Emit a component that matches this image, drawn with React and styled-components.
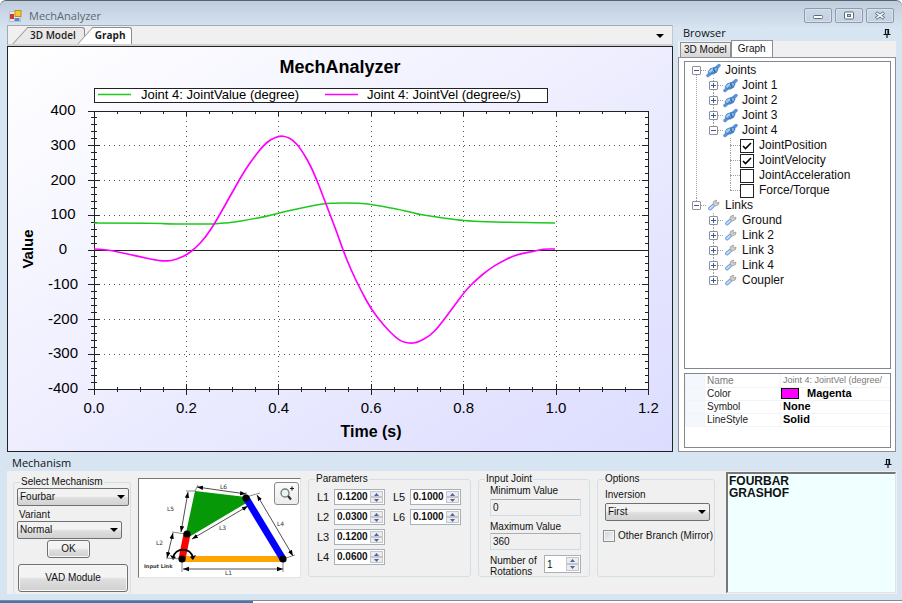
import React, { useState } from 'react';
import styled, { createGlobalStyle, css } from 'styled-components';

const GlobalStyle = createGlobalStyle`
  * {
    box-sizing: border-box;
  }
  body {
    margin: 0;
    background-color: #ffffff;
    color: #111111;
    font-family: 'Liberation Sans', Arial, sans-serif;
    font-size: 10px;
    line-height: 12px;
  }
  button, input, select, textarea {
    margin: 0;
    font: inherit;
    color: inherit;
  }
`;

const Page = styled.div`
  display: flex;
  flex-direction: column;
  min-height: 100vh;
`;
const WindowFrame = styled.div`
  flex: 1;
  display: flex;
  flex-direction: column;
  padding: 0 5px 6px 7px;
  background-color: #d7e4f2;
  background-image: linear-gradient(#becddd, #d7e4f2 28px);
  border-top: 1px solid #5c6269;
  border-bottom: 1px solid #85898e;
  border-radius: 6px 6px 0 0;
`;
const Desktop = styled.div`
  display: flex;
  height: 2px;
  background: linear-gradient(90deg, #3f76b5 28%, #ffffff 28%);
`;

const TitleBar = styled.header`
  display: flex;
  align-items: center;
  gap: 7px;
  height: 24px;
  padding: 5px 3px 0 2px;
`;
const AppName = styled.h1`
  flex: 1;
  margin: 0;
  font: 11px/14px 'Open Sans', sans-serif;
  color: #5d6670;
`;
const WindowButtons = styled.div`
  display: flex;
  gap: 3px;
`;
const WindowButton = styled.button`
  display: flex;
  align-items: center;
  justify-content: center;
  width: 28px;
  height: 15px;
  padding: 0;
  border: 1px solid #8d9bab;
  border-radius: 2px;
  background: linear-gradient(#cbd8e6, #c3d1e1);
  box-shadow: inset 0 0 0 1px #d7e2ee;
`;

const Body = styled.div`
  flex: 1;
  display: flex;
  gap: 5px;
  min-height: 0;
  padding-bottom: 3px;
`;
const Main = styled.main`
  flex: 1;
  display: flex;
  flex-direction: column;
  min-width: 0;
  background-color: #f0f0f0;
`;
const MainTabs = styled.div`
  display: flex;
  align-items: flex-end;
  height: 21px;
  padding-left: 5px;
  padding-right: 8px;
  border-top: 1px solid #a4a9ae;
  border-left: 1px solid #a4a9ae;
  border-right: 1px solid #c4c8cc;
  border-bottom: 2px solid #d0d0d0;
`;
const MainTab = styled.button`
  position: relative;
  isolation: isolate;
  height: 17px;
  margin-left: 16px;
  padding: 0 8px 2px 1px;
  border: 1px solid #8c8c8c;
  border-width: 1px 1px 0 0;
  border-radius: 0 3px 0 0;
  background-color: ${(p) => (p.$active ? '#ffffff' : '#e9e9e9')};
  font: ${(p) => (p.$active ? 'bold' : '600')} 10px/14px 'Open Sans', sans-serif;
  color: #1c1c1c;
  ${(p) => p.$active && css`
    margin-left: 9px;
    padding-right: 6px;
    z-index: 1;
  `}
  &::before {
    content: '';
    position: absolute;
    top: -1px;
    bottom: 0;
    left: -9px;
    width: 16px;
    border-top: 1px solid #8c8c8c;
    border-left: 1px solid #8c8c8c;
    background-color: inherit;
    transform: skewX(-42deg);
    z-index: -1;
  }
`;
const TabMenu = styled.button`
  margin: 0 0 3px auto;
  padding: 3px 0;
  border: 0;
  background: none;
  line-height: 0;
`;
const GraphPanel = styled.div`
  flex: 1;
  display: flex;
  min-height: 0;
  border: 1px solid #222222;
  background: linear-gradient(148deg, #ffffff, #dcdcff);
`;
const Chart = styled.svg`
  display: block;
  flex: 1;
  min-width: 0;
  min-height: 0;
  font-family: 'Liberation Sans', Arial, sans-serif;
`;

const Sidebar = styled.aside`
  display: flex;
  flex-direction: column;
  width: 218px;
  margin-right: 1px;
`;
const PanelHeader = styled.div`
  display: flex;
  align-items: center;
  justify-content: space-between;
  height: 16px;
  padding: 0 5px;
  & h2 {
    margin: 0;
    font: 11px/14px 'Open Sans', sans-serif;
    color: #111111;
  }
`;
const SideTabs = styled.div`
  display: flex;
  align-items: flex-end;
  height: 16px;
  padding-left: 2px;
  background-color: #f0f0f0;
`;
const SideTab = styled.button`
  height: ${(p) => (p.$active ? '18px' : '15px')};
  margin-bottom: ${(p) => (p.$active ? '-1px' : '0')};
  padding: ${(p) => (p.$active ? '0 6px 2px' : '0 3px')};
  border: 1px solid #8e8f94;
  border-bottom: 0;
  background: ${(p) => (p.$active ? '#ffffff' : 'linear-gradient(#f2f2f2, #d6d6d6)')};
  line-height: 14px;
  white-space: nowrap;
`;
const SideContent = styled.div`
  flex: 1;
  display: flex;
  flex-direction: column;
  gap: 4px;
  padding: 3px 4px 3px 5px;
  border: 1px solid #8e8f94;
  background-color: #ffffff;
`;
const TreeBox = styled.div`
  flex: 1;
  padding: 1px 7px;
  border: 1px solid #828790;
`;
const TreeList = styled.ul`
  list-style: none;
  margin: 0;
  padding: 0 0 0 ${(p) => (p.$root ? '0' : '17px')};
`;
const TreeItem = styled.li`
  background-image: repeating-linear-gradient(#a0a0a0 0 1px, transparent 1px 2px);
  background-repeat: no-repeat;
  background-position: 4px ${(p) => (p.$first ? '8px' : '0')};
  background-size: 1px 100%;
  &:last-child {
    background-size: 1px 8px;
  }
`;
const TreeRow = styled.div`
  display: flex;
  align-items: center;
  height: 15px;
  font-size: 12px;
  line-height: 15px;
  white-space: nowrap;
  & label {
    padding-left: 5px;
  }
`;
const Toggle = styled.button`
  display: flex;
  width: 9px;
  height: 9px;
  padding: 0;
  border: 1px solid #919191;
  border-radius: 1px;
  background-color: #ffffff;
`;
const Stub = styled.span`
  width: ${(p) => (p.$leaf ? '10px' : '5px')};
  margin-left: ${(p) => (p.$leaf ? '4px' : '0')};
  border-top: 1px dotted #a0a0a0;
`;
const TreeIcon = styled.svg`
  width: 15px;
  height: 15px;
  margin-right: 4px;
`;
const CheckBox = styled.span`
  position: relative;
  display: flex;
  & input {
    appearance: none;
    width: 14px;
    height: 14px;
    border: 1px solid #222222;
    background-color: #ffffff;
  }
  & svg {
    position: absolute;
    top: 0;
    left: 0;
    pointer-events: none;
    visibility: hidden;
  }
  & input:checked + svg {
    visibility: visible;
  }
`;

const PropertyBox = styled.div`
  height: 75px;
  overflow: hidden;
  border: 1px solid #828790;
`;
const PropertyTable = styled.table`
  width: 100%;
  table-layout: fixed;
  border-collapse: collapse;
  line-height: 11px;
  & td, & th {
    height: 13px;
    padding: 0 0 0 2px;
    border-bottom: 1px solid #f0f3f8;
    border-left: 1px solid #f0f3f8;
    font-weight: normal;
    text-align: left;
    white-space: nowrap;
  }
`;
const Gutter = styled.td`
  width: 19px;
  background-color: #f4f7fc;
`;
const PropertyName = styled.th`
  width: 76px;
  color: ${(p) => (p.$dim ? '#7a7a7a' : '#222222')};
`;
const PropertyValue = styled.td`
  color: ${(p) => (p.$dim ? '#7a7a7a' : '#000000')};
  font-size: ${(p) => (p.$dim ? '9px' : '11px')};
  font-weight: ${(p) => (p.$dim ? 'normal' : 'bold')} !important;
`;
const ColorValue = styled.div`
  display: flex;
  align-items: center;
  gap: 8px;
`;
const Swatch = styled.span`
  width: 18px;
  height: 11px;
  margin-left: -2px;
  border: 1px solid #000000;
  background-color: #ff00ff;
`;

const MechanismPanel = styled.section`
  display: flex;
  align-items: flex-start;
  gap: 7px;
  height: 123px;
  padding: 2px 1px 0 6px;
  background-color: #f0f0f0;
`;
const Group = styled.fieldset`
  flex: none;
  width: ${(p) => p.$width}px;
  min-width: 0;
  height: 104px;
  margin: 0;
  padding: 0 ${(p) => p.$side}px;
  border: 1px solid #d3dfe6;
  border-radius: 3px;
  & legend {
    margin-left: ${(p) => 6 - p.$side}px;
    padding: 0 1px;
  }
`;
const MechanismGroup = styled(Group)`
  height: 118px;
  margin-top: 3px;
  border-bottom: 0;
`;
const Stack = styled.div`
  display: flex;
  flex-direction: column;
  align-items: flex-start;
  padding-top: ${(p) => p.$top || 0}px;
`;
const SelectBox = styled.div`
  position: relative;
  width: ${(p) => (p.$wide ? '112px' : '105px')};
  &::after {
    content: '';
    position: absolute;
    top: 7px;
    right: 4px;
    border: 4px solid transparent;
    border-top-color: #000000;
    border-bottom: 0;
    pointer-events: none;
  }
  & select {
    display: block;
    appearance: none;
    width: 100%;
    height: 18px;
    padding: 0 2px;
    border: 1px solid #707070;
    border-radius: 2px;
    background: linear-gradient(#f2f2f2 45%, #dedede 55%, #d2d2d2);
  }
`;
const VariantLabel = styled.label`
  padding: 3px 0 0 2px;
`;
const PushButton = styled.button`
  width: ${(p) => (p.$large ? '110px' : '43px')};
  height: ${(p) => (p.$large ? '28px' : '18px')};
  margin: ${(p) => (p.$large ? '6px 0 0 1px' : '1px 0 0 30px')};
  padding: 0;
  border: 1px solid #707070;
  border-radius: 3px;
  background: linear-gradient(#f3f3f3 45%, #dfdfdf 55%, #d0d0d0);
  box-shadow: inset 0 0 0 1px #f8f8f8;
`;
const Picture = styled.div`
  position: relative;
  flex: none;
  width: 163px;
  height: 100px;
  margin-top: 5px;
  border: 1px solid #e3e3e3;
  border-top-color: #777777;
  border-left-color: #777777;
  background-color: #ffffff;
  & > svg {
    display: block;
    width: 100%;
    height: 100%;
  }
`;
const ZoomButton = styled.button`
  position: absolute;
  top: 3px;
  right: 1px;
  width: 25px;
  height: 23px;
  padding: 2px;
  border: 1px solid #8a8a8a;
  border-radius: 3px;
  background: linear-gradient(#fbfbfb, #ececec);
  line-height: 0;
`;
const ParamColumns = styled.div`
  display: flex;
  gap: 8px;
  padding-top: 4px;
`;
const ParamColumn = styled.div`
  display: flex;
  flex-direction: column;
  gap: 4px;
`;
const ParamRow = styled.div`
  display: flex;
  align-items: center;
  height: 16px;
  & label {
    width: 17px;
    font-size: 11px;
  }
`;
const Spinner = styled.div`
  display: flex;
  width: ${(p) => (p.$narrow ? '37px' : '51px')};
  height: ${(p) => (p.$narrow ? '18px' : '16px')};
  padding: 1px;
  border: 1px solid #a9b0b8;
  background-color: #ffffff;
  & input {
    flex: 1;
    min-width: 0;
    padding: 0 0 0 1px;
    border: 0;
    background: none;
    font-weight: ${(p) => (p.$narrow ? 'normal' : 'bold')};
  }
`;
const SpinButtons = styled.div`
  display: flex;
  flex-direction: column;
  width: 13px;
  & button {
    flex: 1;
    display: flex;
    align-items: center;
    justify-content: center;
    padding: 0;
    border: 1px solid #c4c6ca;
    background-color: #ececec;
    line-height: 0;
  }
`;
const ReadonlyField = styled.input`
  width: 91px;
  height: 17px;
  margin: ${(p) => (p.$spaced ? '2px 0 5px' : '0 0 5px')};
  padding: 0 2px;
  border: 1px solid #d3dbe2;
  border-top-color: #abadb3;
  background-color: #f0f0f0;
`;
const Rotations = styled.div`
  display: flex;
  justify-content: space-between;
  width: 91px;
  line-height: 11px;
`;
const InversionLabel = styled.label`
  padding-bottom: 2px;
`;
const CheckRow = styled.label`
  display: flex;
  align-items: center;
  gap: 3px;
  padding-top: 9px;
  margin-left: -2px;
  white-space: nowrap;
  & input {
    appearance: none;
    width: 12px;
    height: 12px;
    border: 1px solid #8e8f8f;
    background: linear-gradient(135deg, #cfd3d8, #f6f6f6);
    box-shadow: inset 0 0 0 1px #f4f4f4;
  }
`;
const Output = styled.textarea`
  flex: 1;
  align-self: stretch;
  min-width: 0;
  margin: -1px 0 1px 4px;
  padding: 1px;
  border: 1px solid #e3e3e3;
  border-top: 2px solid #777777;
  border-left: 2px solid #777777;
  background-color: #f0ffff;
  font-size: 12px;
  font-weight: bold;
  resize: none;
`;

const X0 = 86;
const Y0 = 203;
const sx = (t) => X0 + t * 462;
const sy = (v) => Y0 - v * 0.3475;

// curve samples in plot units: x from the left axis, y from the top of the panel
const velocity = [
  [0, 202], [12, 202.5], [24, 205], [36, 207.5], [46, 209.8], [62, 213.2], [70, 214], [77, 213.7],
  [87, 210.7], [93, 207.5], [101, 201.5], [111, 191], [121, 176], [130, 160], [139, 144], [151, 123],
  [161, 109], [169, 99], [177, 92], [186, 89], [192, 89.5], [199, 93], [207, 102], [219, 123],
  [231, 154.5], [242, 183], [249, 203], [257, 223], [267, 243.5], [277, 262], [289, 277.5],
  [301, 290], [308, 294.7], [316, 296.3], [323, 295.7], [336, 289], [346, 278], [359, 260.3],
  [372, 243], [382, 233], [394, 223], [406, 215.3], [419, 209], [429, 206.3], [439, 204.5],
  [449, 202], [461, 202],
];
const position = [
  [0, 176], [68, 176], [70, 177], [118, 177], [126, 176.3], [143, 175], [154, 172.7], [171, 169.7],
  [186, 165.7], [206, 161.3], [221, 158], [236, 156], [266, 156], [277, 157.5], [289, 159.3],
  [313, 164], [323, 167], [336, 169], [356, 172], [369, 173.5], [391, 175], [429, 175.3], [461, 176],
];

// quadratic segments through the midpoints of the samples
const toPath = (pts) => {
  const [first, ...rest] = pts;
  const last = pts[pts.length - 1];
  const curve = rest.slice(0, -1).map(([x, y], i) => {
    const [nx, ny] = rest[i + 1];
    return `Q${X0 + x} ${y} ${X0 + (x + nx) / 2} ${(y + ny) / 2}`;
  });
  return `M${X0 + first[0]} ${first[1]}${curve.join('')}L${X0 + last[0]} ${last[1]}`;
};

const xMajor = [0, 0.2, 0.4, 0.6, 0.8, 1, 1.2];
const yMajor = [400, 300, 200, 100, 0, -100, -200, -300, -400];
const xMinor = Array.from({ length: 25 }, (_, i) => i * 0.05);
const yMinor = Array.from({ length: 41 }, (_, i) => -400 + i * 20);

function Graph() {
  const right = sx(1.2);
  return (
    <Chart viewBox="0 0 664 404" role="img" aria-label="MechAnalyzer">
      <text x="332" y="26" textAnchor="middle" fontSize="18" fontWeight="bold">MechAnalyzer</text>
      <rect x="86.5" y="41.5" width="453" height="14" fill="#fff" stroke="#222" />
      <path d="M90 47.5h33" stroke="#1fc81f" strokeWidth="1.5" />
      <text x="133" y="52" fontSize="13">Joint 4: JointValue (degree)</text>
      <path d="M317 47.5h33" stroke="#f0f" strokeWidth="1.5" />
      <text x="359" y="52" fontSize="13">Joint 4: JointVel (degree/s)</text>

      <rect x={X0} y={sy(400)} width={right - X0} height="278" fill="#fff" />
      <g stroke="#555" strokeDasharray="1 4" shapeRendering="crispEdges">
        {xMajor.slice(1, 6).map((t) => (
          <path key={t} d={`M${sx(t)} 64V342`} />
        ))}
        {yMajor.slice(1, 8).map((v) => (
          <path key={v} d={`M${X0} ${sy(v)}H${right}`} />
        ))}
      </g>
      <g stroke="#222" fill="none" shapeRendering="crispEdges">
        <rect x={X0} y="64" width={right - X0} height="278" />
        <path d={`M${X0} ${Y0}H${right}`} />
        {xMinor.map((t) => (
          <path key={t} d={`M${sx(t)} 64v3M${sx(t)} 340v5`} />
        ))}
        {yMinor.map((v) => (
          <path key={v} d={`M${X0 - 3} ${sy(v)}h6M${right - 3} ${sy(v)}h3`} />
        ))}
        {xMajor.map((t) => (
          <path key={t} d={`M${sx(t)} 64v5M${sx(t)} 337v11`} />
        ))}
        {yMajor.map((v) => (
          <path key={v} d={`M${X0 - 6} ${sy(v)}h12M${right - 6} ${sy(v)}h6`} />
        ))}
      </g>
      <path d={toPath(position)} fill="none" stroke="#1fc81f" strokeWidth="1.5" />
      <path d={toPath(velocity)} fill="none" stroke="#f0f" strokeWidth="1.7" />

      <g fontSize="15" textAnchor="middle">
        {yMajor.map((v) => (
          <text key={v} x="55" y={sy(v) + 4}>{v}</text>
        ))}
        {xMajor.map((t) => (
          <text key={t} x={sx(t)} y="366">{t.toFixed(1)}</text>
        ))}
      </g>
      <g fontSize="16" fontWeight="bold" textAnchor="middle">
        <text x="363" y="390">Time (s)</text>
        <text transform="translate(25 202) rotate(-90)" fontSize="15">Value</text>
      </g>
    </Chart>
  );
}

function PinIcon() {
  return (
    <svg width="8" height="10" viewBox="0 0 8 10" aria-hidden="true">
      <path d="M2.5 6V1.5h3V6M5 1v5M0.5 6.5h7M4 7v3" fill="none" stroke="#111" strokeWidth="1.2" />
    </svg>
  );
}

function JointIcon() {
  return (
    <TreeIcon viewBox="0 0 15 15" aria-hidden="true">
      <path d="M2 12.5L13 2.5" stroke="#5e92d2" strokeWidth="3.4" strokeLinecap="round" />
      <path d="M1.5 9L4 5.5L8 4L11 3.5L12.5 6L11 9.500L7.500 11.500L4 11.5Z" fill="#4a84cc" />
      <path d="M2.5 8.5L5 6L8 5L6.5 8L4 10Z" fill="#a3cbf0" />
      <path d="M8.5 5L10.5 5L11 7L9.5 8.5Z" fill="#86b4e6" />
      <path d="M7.5 5L9 9.500" stroke="#2c5c9c" strokeWidth="0.8" />
      <path d="M6.5 7.500l1.500 1.500" stroke="#7cc9a0" />
    </TreeIcon>
  );
}

function LinkIcon() {
  return (
    <TreeIcon viewBox="0 0 15 15" aria-hidden="true">
      <path d="M4 10.5L7 7.8" stroke="#6f9fe0" strokeWidth="3.8" strokeLinecap="round" />
      <path d="M4 10.5L7 7.8" stroke="#c6dcfa" strokeWidth="1.8" strokeLinecap="round" />
      <path d="M7 6.5L7.5 3.5L10.5 2L10 4.3L11 5L13 4L12.5 6.5L9.5 8Z" fill="#cfcfcf" stroke="#8f8f8f" strokeWidth="0.7" />
    </TreeIcon>
  );
}

function TreeNode({ node, first }) {
  const [open, setOpen] = useState(!!node.open);
  return (
    <TreeItem $first={first}>
      <TreeRow>
        <Toggle aria-label={node.label} aria-expanded={open} onClick={() => setOpen(!open)}>
          <svg width="7" height="7" viewBox="0 0 7 7" aria-hidden="true">
            <path d={open ? 'M1 3.5h5' : 'M1 3.5h5M3.5 1v5'} stroke="#3a58a8" />
          </svg>
        </Toggle>
        <Stub />
        {node.kind === 'joint' ? <JointIcon /> : <LinkIcon />}
        {node.label}
      </TreeRow>
      {open && node.children && (
        <TreeList>
          {node.children.map((c) => <TreeNode key={c.label} node={c} />)}
        </TreeList>
      )}
      {open && node.checks && (
        <TreeList>
          {node.checks.map(([name, on]) => (
            <TreeItem key={name}>
              <TreeRow>
                <Stub $leaf />
                <CheckBox>
                  <input type="checkbox" id={name} defaultChecked={on} />
                  <svg width="14" height="14" viewBox="0 0 14 14" aria-hidden="true">
                    <path d="M3 7L5.5 9.5L11 4" fill="none" stroke="#000" strokeWidth="1.6" />
                  </svg>
                </CheckBox>
                <label htmlFor={name}>{name}</label>
              </TreeRow>
            </TreeItem>
          ))}
        </TreeList>
      )}
    </TreeItem>
  );
}

const tree = [
  {
    label: 'Joints',
    kind: 'joint',
    open: true,
    children: [
      { label: 'Joint 1', kind: 'joint' },
      { label: 'Joint 2', kind: 'joint' },
      { label: 'Joint 3', kind: 'joint' },
      {
        label: 'Joint 4',
        kind: 'joint',
        open: true,
        checks: [
          ['JointPosition', true],
          ['JointVelocity', true],
          ['JointAcceleration', false],
          ['Force/Torque', false],
        ],
      },
    ],
  },
  {
    label: 'Links',
    kind: 'link',
    open: true,
    children: ['Ground', 'Link 2', 'Link 3', 'Link 4', 'Coupler'].map((label) => ({ label, kind: 'link' })),
  },
];

function NumberSpinner({ id, value, step, narrow }) {
  const [num, setNum] = useState(value);
  const digits = narrow ? 0 : 4;
  const change = (d) => setNum((Number(num) + d).toFixed(digits));
  return (
    <Spinner $narrow={narrow}>
      <input id={id} value={num} onChange={(e) => setNum(e.target.value)} />
      <SpinButtons>
        <button aria-label="Increase" onClick={() => change(step)}>
          <svg width="5" height="3" viewBox="0 0 5 3"><path d="M0 3L2.5 0L5 3Z" fill="#4a62b0" /></svg>
        </button>
        <button aria-label="Decrease" onClick={() => change(-step)}>
          <svg width="5" height="3" viewBox="0 0 5 3"><path d="M0 0L2.5 3L5 0Z" fill="#4a62b0" /></svg>
        </button>
      </SpinButtons>
    </Spinner>
  );
}

const dimensionLines = [
  'M58 8L107 15',
  'M49 13L42 53',
  'M34 54L28 79',
  'M53 60L109 27',
  'M118 16L154 77',
  'M44 90H144',
];

function FourbarDrawing() {
  return (
    <svg viewBox="0 0 161 98" role="img" aria-label="Fourbar">
      <defs>
        <marker id="arrow" viewBox="0 0 6 6" refX="6" refY="3" markerWidth="6" markerHeight="6" orient="auto-start-reverse" markerUnits="userSpaceOnUse">
          <path d="M0 0.8L6 3L0 5.2Z" />
        </marker>
      </defs>
      <path d="M43 80H144" stroke="#ffa500" strokeWidth="6" />
      <path d="M43 80L48 55" stroke="#f00" strokeWidth="7" />
      <path d="M56 12L107 18L109 23L50 58L47 54Z" fill="#069806" />
      <path d="M107 19L144 80" stroke="#00f" strokeWidth="7" />
      <path d="M34 79C36 68 52 68 54 79" fill="none" stroke="#000" strokeWidth="2" />
      <path d="M31 76L37 78L34 81ZM51 78L57 76L54 81Z" />
      <g stroke="#222" strokeWidth="0.8">
        {dimensionLines.map((d) => (
          <path key={d} d={d} markerStart="url(#arrow)" markerEnd="url(#arrow)" />
        ))}
      </g>
      <path d="M47 12H56M56 12L59 6M33 53L47 55M27 79L43 80M107 18L121 14M144 80L156 76M43 83V93M144 83V93M107 13V18" stroke="#555" strokeWidth="0.7" />
      <circle cx="43" cy="80" r="3.6" />
      <circle cx="48" cy="55" r="3.6" />
      <circle cx="107" cy="19" r="3.6" />
      <circle cx="144" cy="80" r="3.6" />
      <g fontSize="6" fontFamily="DejaVu Sans, sans-serif" fill="#333">
        <text x="81" y="10">L6</text>
        <text x="28" y="32">L5</text>
        <text x="17" y="66">L2</text>
        <text x="80" y="51">L3</text>
        <text x="138" y="47">L4</text>
        <text x="86" y="96">L1</text>
        <text x="5" y="89" fontWeight="bold" fontSize="5">Input Link</text>
      </g>
    </svg>
  );
}

const paramColumns = [
  [['L1', '0.1200'], ['L2', '0.0300'], ['L3', '0.1200'], ['L4', '0.0600']],
  [['L5', '0.1000'], ['L6', '0.1000']],
];

export default function App() {
  return (
    <Page>
      <GlobalStyle />
      <WindowFrame>
        <TitleBar>
          <svg width="13" height="12" viewBox="0 0 13 12" aria-hidden="true">
            <rect x="0.5" y="1.5" width="11" height="10" fill="#e4e8ee" stroke="#b9c2cc" />
            <rect x="1" y="4" width="4" height="5" fill="#d03a2b" />
            <rect x="6" y="0.5" width="6" height="6" fill="#f5c738" stroke="#c58f12" />
            <rect x="5.5" y="8" width="5" height="3" fill="#4f86e0" />
          </svg>
          <AppName>MechAnalyzer</AppName>
          <WindowButtons>
            <WindowButton aria-label="Minimize">
              <svg width="12" height="8" viewBox="0 0 12 8"><rect x="1.5" y="3.5" width="9" height="3" rx="1" fill="#fff" stroke="#5f6a76" /></svg>
            </WindowButton>
            <WindowButton aria-label="Maximize">
              <svg width="12" height="9" viewBox="0 0 12 9"><rect x="1.5" y="1" width="9" height="7" rx="1" fill="#fff" stroke="#5f6a76" /><rect x="4.5" y="3.5" width="3" height="2" fill="#c3d1e1" stroke="#5f6a76" /></svg>
            </WindowButton>
            <WindowButton aria-label="Close">
              <svg width="12" height="9" viewBox="0 0 12 9"><path d="M2 1.5L10 7.5M10 1.5L2 7.5" stroke="#5f6a76" strokeWidth="3.4" /><path d="M2.5 1.8L9.5 7.2M9.5 1.8L2.5 7.2" stroke="#fff" strokeWidth="1.6" /></svg>
            </WindowButton>
          </WindowButtons>
        </TitleBar>

        <Body>
          <Main>
            <MainTabs>
              <MainTab>3D Model</MainTab>
              <MainTab $active>Graph</MainTab>
              <TabMenu aria-label="Tabs">
                <svg width="8" height="4" viewBox="0 0 8 4"><path d="M0 0H8L4 4Z" /></svg>
              </TabMenu>
            </MainTabs>
            <GraphPanel>
              <Graph />
            </GraphPanel>
          </Main>

          <Sidebar>
            <PanelHeader>
              <h2>Browser</h2>
              <PinIcon />
            </PanelHeader>
            <SideTabs>
              <SideTab>3D Model</SideTab>
              <SideTab $active>Graph</SideTab>
            </SideTabs>
            <SideContent>
              <TreeBox>
                <TreeList $root>
                  {tree.map((n, i) => <TreeNode key={n.label} node={n} first={i === 0} />)}
                </TreeList>
              </TreeBox>
              <PropertyBox>
                <PropertyTable>
                  <tbody>
                    <tr>
                      <Gutter />
                      <PropertyName $dim>Name</PropertyName>
                      <PropertyValue $dim>Joint 4: JointVel (degree/</PropertyValue>
                    </tr>
                    <tr>
                      <Gutter />
                      <PropertyName>Color</PropertyName>
                      <PropertyValue><ColorValue><Swatch />Magenta</ColorValue></PropertyValue>
                    </tr>
                    <tr>
                      <Gutter />
                      <PropertyName>Symbol</PropertyName>
                      <PropertyValue>None</PropertyValue>
                    </tr>
                    <tr>
                      <Gutter />
                      <PropertyName>LineStyle</PropertyName>
                      <PropertyValue>Solid</PropertyValue>
                    </tr>
                  </tbody>
                </PropertyTable>
              </PropertyBox>
            </SideContent>
          </Sidebar>
        </Body>

        <PanelHeader>
          <h2>Mechanism</h2>
          <PinIcon />
        </PanelHeader>
        <MechanismPanel>
          <MechanismGroup $width={118} $side={3}>
            <legend>Select Mechanism</legend>
            <Stack>
              <SelectBox $wide>
                <select aria-label="Select Mechanism"><option>Fourbar</option></select>
              </SelectBox>
              <VariantLabel htmlFor="variant">Variant</VariantLabel>
              <SelectBox>
                <select id="variant"><option>Normal</option></select>
              </SelectBox>
              <PushButton>OK</PushButton>
              <PushButton $large>VAD Module</PushButton>
            </Stack>
          </MechanismGroup>

          <Picture>
            <FourbarDrawing />
            <ZoomButton aria-label="Zoom">
              <svg width="19" height="17" viewBox="0 0 19 17">
                <circle cx="8" cy="8" r="4" fill="#e8f4f4" stroke="#777" strokeWidth="1.3" />
                <path d="M11 11L14 14.5" stroke="#333" strokeWidth="2.2" />
                <path d="M13 3.5h4M15 1.5v4" stroke="#222" strokeWidth="1.2" />
              </svg>
            </ZoomButton>
          </Picture>

          <Group $width={163} $side={8}>
            <legend>Parameters</legend>
            <ParamColumns>
              {paramColumns.map((rows, i) => (
                <ParamColumn key={i}>
                  {rows.map(([name, v]) => (
                    <ParamRow key={name}>
                      <label htmlFor={name}>{name}</label>
                      <NumberSpinner id={name} value={v} step={0.01} />
                    </ParamRow>
                  ))}
                </ParamColumn>
              ))}
            </ParamColumns>
          </Group>

          <Group $width={112} $side={11}>
            <legend>Input Joint</legend>
            <Stack>
              <label htmlFor="min">Minimum Value</label>
              <ReadonlyField id="min" $spaced readOnly value="0" />
              <label htmlFor="max">Maximum Value</label>
              <ReadonlyField id="max" readOnly value="360" />
              <Rotations>
                <label htmlFor="rotations">Number of<br />Rotations</label>
                <NumberSpinner id="rotations" value="1" step={1} narrow />
              </Rotations>
            </Stack>
          </Group>

          <Group $width={118} $side={7}>
            <legend>Options</legend>
            <Stack $top={4}>
              <InversionLabel htmlFor="inversion">Inversion</InversionLabel>
              <SelectBox>
                <select id="inversion"><option>First</option></select>
              </SelectBox>
              <CheckRow>
                <input type="checkbox" />
                Other Branch (Mirror)
              </CheckRow>
            </Stack>
          </Group>

          <Output aria-label="Mechanism type" readOnly value={'FOURBAR\nGRASHOF'} />
        </MechanismPanel>
      </WindowFrame>
      <Desktop />
    </Page>
  );
}
